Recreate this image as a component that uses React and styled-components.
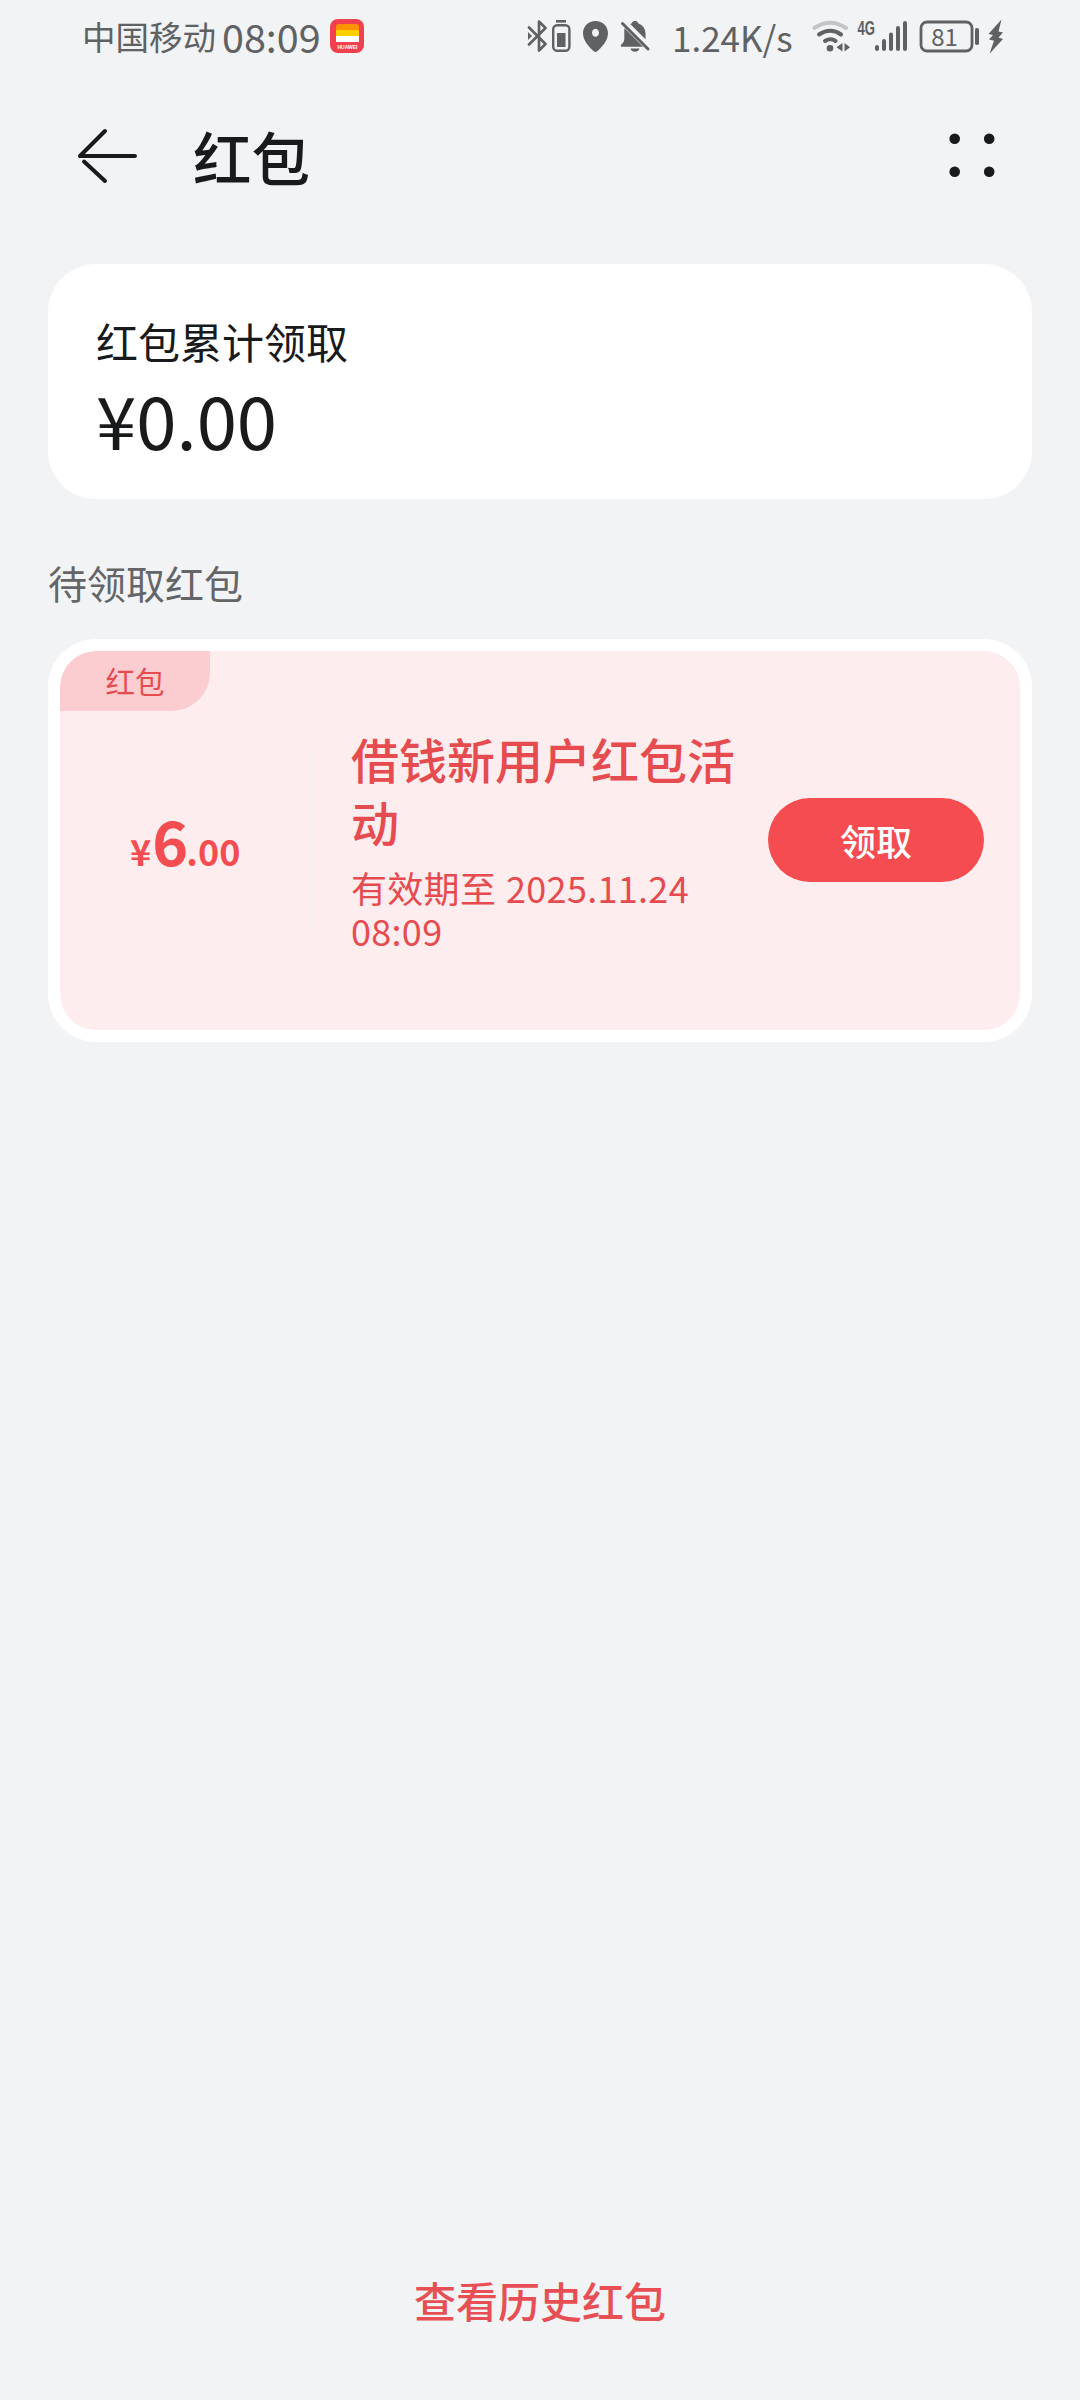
import React from "react";
import styled, { createGlobalStyle } from "styled-components";

const GlobalStyle = createGlobalStyle`
  * {
    box-sizing: border-box;
  }
  body {
    margin: 0;
    background-color: #f1f3f5;
    font-family: "Noto Sans CJK SC", "Noto Sans", sans-serif;
  }
`;
const Page = styled.div`
  width: 1080px;
  height: 2400px;
  display: flex;
  flex-direction: column;
  background-color: #f1f3f5;
  color: #191a1b;
`;
const StatusBar = styled.div`
  height: 72px;
  padding: 0 75px 0 82px;
  display: flex;
  align-items: center;
  justify-content: space-between;
  color: #606163;
  line-height: 72px;
`;
const StatusGroup = styled.div`
  display: flex;
  align-items: center;
  height: 72px;
`;
const Carrier = styled.span`
  width: 140px;
  font-size: 33.5px;
`;
const Time = styled.span`
  width: 108px;
  font-size: 39.5px;
  white-space: nowrap;
`;
const Speed = styled.span`
  width: 140px;
  margin-left: 21px;
  padding-top: 2px;
  font-size: 35px;
  white-space: nowrap;
`;
const StatusIcon = styled.svg`
  display: block;
  flex: none;
  width: ${(props) => props.$w}px;
  height: 72px;
  margin-left: ${(props) => props.$gap || 0}px;
`;
const Header = styled.div`
  height: 168px;
  padding: 0 80px 0 76px;
  display: flex;
  align-items: center;
`;
const BackIcon = styled.svg`
  width: 64px;
  height: 60px;
  display: block;
`;
const Title = styled.h1`
  flex: 1;
  margin: 0 0 1px 53px;
  font-size: 58.5px;
  line-height: 80px;
  font-weight: 500;
`;
const MenuIcon = styled.svg`
  width: 51px;
  height: 50px;
  display: block;
`;
const TotalCard = styled.div`
  height: 235px;
  margin: 24px 48px 0;
  padding: 49px 48px 0;
  border-radius: 48px;
  background-color: #fff;
`;
const TotalLabel = styled.div`
  font-size: 42px;
  line-height: 56px;
`;
const TotalAmount = styled.div`
  margin-top: 2px;
  font-size: 72.5px;
  line-height: 96px;
`;
const SectionTitle = styled.div`
  margin: 55px 48px 0;
  font-size: 39px;
  line-height: 56px;
  color: #646567;
`;
const CouponCard = styled.div`
  height: 403px;
  margin: 29px 48px 0;
  padding: 12px;
  border-radius: 48px;
  background-color: #fff;
`;
const Coupon = styled.div`
  position: relative;
  height: 379px;
  display: flex;
  align-items: center;
  overflow: hidden;
  border-radius: 36px;
  background-color: #fdedee;
  color: #e64b50;
`;
const Tag = styled.div`
  position: absolute;
  left: 0;
  top: 0;
  width: 150px;
  height: 60px;
  border-radius: 36px 0 38px 0;
  background-color: #fccdd0;
  font-size: 29.5px;
  line-height: 58px;
  text-align: center;
`;
const Price = styled.div`
  width: 249px;
  padding: 8px 0 0 70px;
  font-size: 36px;
  line-height: 80px;
  font-weight: 700;
  white-space: nowrap;
  color: #f34d51;
`;
const PriceMain = styled.span`
  margin: 0 -2px 0 1px;
  font-size: 61px;
`;
const Divider = styled.div`
  width: 6px;
  height: 175px;
  margin-right: 36px;
  background-color: #faefef;
`;
const Info = styled.div`
  width: 388px;
  padding-bottom: 2px;
`;
const CouponTitle = styled.div`
  font-size: 48px;
  line-height: 63px;
  font-weight: 500;
`;
const CouponDate = styled.div`
  margin-top: 13px;
  font-size: 36px;
  line-height: 43px;
  letter-spacing: 0.3px;
  word-spacing: 1.5px;
`;
const ClaimButton = styled.button`
  width: 216px;
  height: 84px;
  margin: 0 0 1px 29px;
  padding: 0;
  border: none;
  border-radius: 42px;
  background-color: #f44c50;
  color: #fff;
  font-family: inherit;
  font-size: 36px;
  font-weight: 500;
  line-height: 84px;
`;
const HistoryLink = styled.div`
  margin-top: auto;
  height: 135px;
  font-size: 42px;
  line-height: 70px;
  font-weight: 500;
  text-align: center;
  color: #e84f54;
`;

function HuaweiIcon() {
  return (
    <StatusIcon $w={34} viewBox="0 0 34 72">
      <rect y="19" width="34" height="34" rx="8" fill="#f2404f" />
      <path d="M6 30v-3q0-3 3-3h17q3 0 3 3v3z" fill="#ff9200" />
      <rect x="6" y="30" width="23" height="6" fill="#ffcf00" />
      <rect x="6" y="36" width="23" height="6" fill="#fff" />
      <text
        x="17.5"
        y="48.5"
        fontSize="5"
        fontWeight="700"
        fontFamily="Liberation Sans, sans-serif"
        textAnchor="middle"
        textLength="20"
        fill="#fff"
      >
        HUAWEI
      </text>
    </StatusIcon>
  );
}

function BluetoothIcon() {
  return (
    <StatusIcon $w={46} viewBox="526 0 46 72" fill="none" stroke="currentColor">
      <path
        d="M529 27.5L545.500 44l-6.500 6.500v-29L545.500 28l-16.500 16.500"
        strokeWidth="2.700"
        strokeLinejoin="round"
        strokeLinecap="round"
      />
      <path d="M528 32l4 4-4 4z" fill="currentColor" stroke="none" />
      <rect x="553.200" y="25.200" width="16.200" height="25.600" rx="4" strokeWidth="2.400" />
      <path d="M556 21.300h10" strokeWidth="2.600" />
      <rect x="557" y="33" width="8.500" height="14" fill="currentColor" stroke="none" />
    </StatusIcon>
  );
}

function PinIcon() {
  return (
    <StatusIcon $w={26} $gap={11} viewBox="583 0 26 72">
      <path
        fillRule="evenodd"
        fill="currentColor"
        d="M595.500 21c7.200 0 12.500 5.400 12.500 12.300 0 7.500-6.500 14.200-10.800 18q-1.700 1.400-3.400 0c-4.300-3.800-10.800-10.500-10.800-18C583 26.400 588.300 21 595.500 21zm0 7.800c-2.100 0-3.500 1.800-3.500 4s1.400 4 3.500 4 3.500-1.800 3.500-4-1.400-4-3.500-4z"
      />
    </StatusIcon>
  );
}

function BellIcon() {
  return (
    <StatusIcon $w={31} $gap={11} viewBox="620 0 31 72">
      <path
        fill="currentColor"
        d="M630.500 24.200c1.500-.7 1.500-3.200 4.500-3.200s2.500 2 4 2.800c4.500 2 6.500 5.500 6.500 10v5.400zM624.500 28.200L643 46.700h-21.500c-1 0-1-1.500 0-2.500 2.500-2.200 2.800-3.500 2.800-6v-6c0-1.500 0-2.500.2-4zM630.500 48.500h9c-1 4.300-8 4.300-9 0z"
      />
      <path d="M622.500 23.500l25.500 25.500" stroke="currentColor" strokeWidth="3" strokeLinecap="round" />
    </StatusIcon>
  );
}

function WifiIcon() {
  return (
    <StatusIcon $w={38} viewBox="812 0 38 72" fill="none" stroke="currentColor">
      <g strokeWidth="4" strokeLinecap="round">
        <path d="M814.500 28q15.500-10.500 31.500 0" opacity="0.320" />
        <path d="M819 34.500q11.500-7.500 22 0" />
        <path d="M825 41q5.500-3.400 10.500 0" />
      </g>
      <circle cx="830" cy="48.300" r="3.300" fill="currentColor" stroke="none" />
      <path
        d="M842.500 43v8.500l-6-4.200zM844.500 43v8.500l5.500-4.200z"
        fill="currentColor"
        stroke="none"
      />
    </StatusIcon>
  );
}

function SignalIcon() {
  return (
    <StatusIcon $w={52} $gap={7} viewBox="857 0 52 72">
      <text
        x="857.500"
        y="34.500"
        fontSize="19.500"
        fontWeight="700"
        fontFamily="Liberation Sans, sans-serif"
        textLength="17.500"
        lengthAdjust="spacingAndGlyphs"
        fill="currentColor"
      >
        4G
      </text>
      <path
        d="M877 47v2M884 41v8M891 34.500v14.500M898 28v21M905 23v26"
        stroke="currentColor"
        strokeWidth="4"
        strokeLinecap="round"
      />
    </StatusIcon>
  );
}

function BatteryIcon() {
  return (
    <StatusIcon $w={86} $gap={10} viewBox="919 0 86 72">
      <rect
        x="921"
        y="22"
        width="51"
        height="29"
        rx="6"
        fill="none"
        stroke="currentColor"
        strokeWidth="2.800"
      />
      <rect x="975" y="28" width="4" height="17" rx="1.800" fill="currentColor" />
      <text
        x="944.500"
        y="45.500"
        fontSize="24"
        fontFamily="Noto Sans CJK SC, sans-serif"
        textAnchor="middle"
        fill="currentColor"
      >
        81
      </text>
      <path
        d="M1001.500 19.500L988.500 34l4.500 1-4 4.500 5 1.200-4.500 13L1003 39l-4.500-1.500 4.500-5-4.500-1z"
        fill="currentColor"
      />
    </StatusIcon>
  );
}

function App() {
  return (
    <Page>
      <GlobalStyle />
      <StatusBar>
        <StatusGroup>
          <Carrier>中国移动</Carrier>
          <Time>08:09</Time>
          <HuaweiIcon />
        </StatusGroup>
        <StatusGroup>
          <BluetoothIcon />
          <PinIcon />
          <BellIcon />
          <Speed>1.24K/s</Speed>
          <WifiIcon />
          <SignalIcon />
          <BatteryIcon />
        </StatusGroup>
      </StatusBar>
      <Header>
        <BackIcon
          viewBox="76 126 64 60"
          fill="none"
          stroke="currentColor"
          strokeWidth="4"
          strokeLinecap="round"
        >
          <path d="M105 131L80 156h55" strokeLinejoin="round" />
          <path d="M84 161.500l21 19.500" />
        </BackIcon>
        <Title>红包</Title>
        <MenuIcon viewBox="949 131 51 50" fill="currentColor">
          <circle cx="954.700" cy="138.700" r="5.300" />
          <circle cx="989.200" cy="138.700" r="5.300" />
          <circle cx="954.700" cy="171.700" r="5.300" />
          <circle cx="989.200" cy="171.700" r="5.300" />
        </MenuIcon>
      </Header>
      <TotalCard>
        <TotalLabel>红包累计领取</TotalLabel>
        <TotalAmount>¥0.00</TotalAmount>
      </TotalCard>
      <SectionTitle>待领取红包</SectionTitle>
      <CouponCard>
        <Coupon>
          <Tag>红包</Tag>
          <Price>
            ¥<PriceMain>6</PriceMain>.00
          </Price>
          <Divider />
          <Info>
            <CouponTitle>借钱新用户红包活动</CouponTitle>
            <CouponDate>有效期至 2025.11.24 08:09</CouponDate>
          </Info>
          <ClaimButton>领取</ClaimButton>
        </Coupon>
      </CouponCard>
      <HistoryLink>查看历史红包</HistoryLink>
    </Page>
  );
}

export default App;
